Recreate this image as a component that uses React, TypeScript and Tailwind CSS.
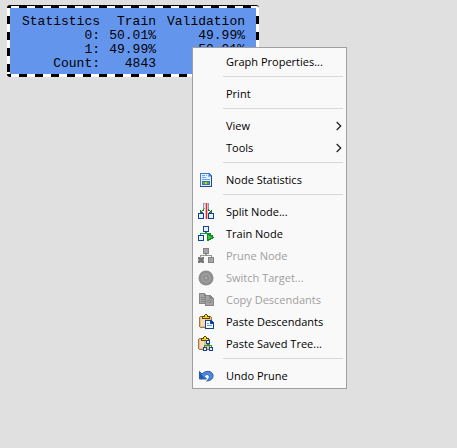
import type { ReactNode } from "react";

const OUT = "#12409a";

function Svg({ children }: { children: ReactNode }) {
  return (
    <svg width="18" height="18" viewBox="0 0 18 18" shapeRendering="crispEdges" aria-hidden="true">
      {children}
    </svg>
  );
}

function Box({ x, y, s = 6, stroke = OUT, fill = "#e4f1ff" }: { x: number; y: number; s?: number; stroke?: string; fill?: string }) {
  return (
    <>
      <rect x={x} y={y} width={s} height={s} fill={stroke} />
      <rect x={x + 1} y={y + 1} width={s - 2} height={s - 2} fill={fill} />
    </>
  );
}

const icons: Record<string, ReactNode> = {
  stats: (
    <Svg>
      <path d="M3 2h9l3 3v11H3z" fill="#3f78cc" />
      <path d="M14 5h1v11H3v-1h11z" fill="#1d4a9e" />
      <path d="M4 3h7v3h3v9H4z" fill="#e3f0ff" />
      <path d="M11 3h1v2h2v1h-3z" fill="#8ab4ea" />
      <path d="M5 4h3v1H5zM9 4h1v1H9zM5 6h4v1H5zM5 8h8v1H5z" fill="#6fa3e6" />
      <path d="M5 10h8v4H5z" fill="#3c6db5" />
      <path d="M6 11h2v2H6z" fill="#3fbf4a" />
      <path d="M8 11h2v2H8z" fill="#f0b429" />
      <path d="M10 11h2v2h-2z" fill="#3ab54a" />
    </Svg>
  ),
  split: (
    <Svg>
      <Box x={6} y={0} stroke="#7d9ccc" fill="#d9e6f7" />
      <path d="M6 6h1v2H5v1h1v1H3V7h1v1h1V7h1zM11 6h1v1h1v1h1V7h1v3h-3V9h1V8h-2z" fill="#16812a" />
      <path d="M8 0h3v16H8z" fill="#f7b4b4" />
      <path d="M9 0h1v16H9z" fill="#d22c2c" />
      <Box x={1} y={10} />
      <Box x={11} y={10} />
    </Svg>
  ),
  train: (
    <Svg>
      <Box x={6} y={1} />
      <path d="M8 7h2v1h4v2h-1V9H4v1H3V8h5z" fill="#23963a" />
      <Box x={1} y={10} />
      <path d="M10 8h2v1h2v1h2v2h1v1h-1v1h-2v1h-2v1h-2z" fill="#0f8a1e" />
      <path d="M11 10h1v1h2v1h1v1h-2v1h-2z" fill="#35c245" />
    </Svg>
  ),
  prune: (
    <Svg>
      <Box x={6} y={1} stroke="#858585" fill="#a5a5a5" />
      <path d="M8 7h2v1h5v2h-1V9H4v1H3V8h5z" fill="#959595" />
      <Box x={11} y={10} stroke="#858585" fill="#a5a5a5" />
      <path d="M1 10h6v6H1z" fill="#a5a5a5" />
      <path d="M1 10h2v1h2v-1h2v2H6v2h1v2H5v-1H3v1H1v-2h1v-2H1z" fill="#757575" />
    </Svg>
  ),
  target: (
    <svg width="18" height="18" viewBox="0 0 18 18" aria-hidden="true">
      <circle cx="9" cy="9" r="7.5" fill="#8e8e8e" />
      <circle cx="9" cy="9" r="5" fill="#9e9e9e" />
      <circle cx="9" cy="9" r="3" fill="#8e8e8e" />
      <circle cx="9" cy="9" r="1.3" fill="#adadad" />
    </svg>
  ),
  copy: (
    <Svg>
      <path d="M2 2h5l3 3v8H2z" fill="#868686" />
      <path d="M3 3h4v2h2v7H3z" fill="#a5a5a5" />
      <path d="M4 6h4v1H4zM4 8h4v1H4zM4 10h4v1H4z" fill="#868686" />
      <path d="M8 4h5l4 4v7H8z" fill="#868686" />
      <path d="M9 5h3v3h4v6H9z" fill="#a5a5a5" />
      <path d="M10 9h5v1h-5zM10 11h5v1h-5z" fill="#868686" />
    </Svg>
  ),
  paste: (
    <Svg>
      <path d="M3 3h11v1h1v10h-1v1H3v-1H2V4h1z" fill="#a87442" />
      <path d="M3 4h11v10H3z" fill="#e6bf90" />
      <path d="M4 5h4v8H4z" fill="#f6dcb6" />
      <path d="M5 3h2V2h1V1h2v1h1v1h2v3H5z" fill="#5c4c0c" />
      <path d="M6 4h2V2h2v2h2v1H6z" fill="#f5d51e" />
      <path d="M8 7h6l3 3v6H8z" fill={OUT} />
      <path d="M9 8h4v3h3v4H9z" fill="#f4f9ff" />
      <path d="M10 10h2v1h-2zM10 12h5v1h-5z" fill="#6ba0e0" />
    </Svg>
  ),
  pasteTree: (
    <Svg>
      <path d="M2 3h10v1h1v10h-1v1H2v-1H1V4h1z" fill="#a87442" />
      <path d="M2 4h10v10H2z" fill="#e6bf90" />
      <path d="M3 5h4v8H3z" fill="#f6dcb6" />
      <path d="M4 3h2V2h1V1h2v1h1v1h2v3H4z" fill="#5c4c0c" />
      <path d="M5 4h2V2h2v2h2v1H5z" fill="#f5d51e" />
      <Box x={9} y={5} s={4} />
      <path d="M10 9h2v1h3v2h-1v-1H8v1H7v-2h3z" fill="#23963a" />
      <Box x={6} y={12} s={4} />
      <Box x={12} y={12} s={4} />
    </Svg>
  ),
  undo: (
    <svg width="18" height="18" viewBox="0 0 18 18" aria-hidden="true">
      <path
        d="M2.500 4.500V12H9.500L7.300 9.500C8.500 7 11.800 6.800 12.300 9.300c.3 1.900-.8 3.300-2.600 4.700 4.300-.2 6.700-2.600 6.300-5.800C15.400 4 9 2.700 5 7z"
        fill="#4f8ade"
        stroke="#2459ae"
      />
      <path d="M3 6v5.500h4.500z" fill="#1d55b0" />
    </svg>
  ),
};

type Item = { label: string; icon?: string; disabled?: boolean; sub?: boolean };

const groups: Item[][] = [
  [{ label: "Graph Properties..." }],
  [{ label: "Print" }],
  [{ label: "View", sub: true }, { label: "Tools", sub: true }],
  [{ label: "Node Statistics", icon: "stats" }],
  [
    { label: "Split Node...", icon: "split" },
    { label: "Train Node", icon: "train" },
    { label: "Prune Node", icon: "prune", disabled: true },
    { label: "Switch Target...", icon: "target", disabled: true },
    { label: "Copy Descendants", icon: "copy", disabled: true },
    { label: "Paste Descendants", icon: "paste" },
    { label: "Paste Saved Tree...", icon: "pasteTree" },
  ],
  [{ label: "Undo Prune", icon: "undo" }],
];

const rows = [
  ["0:", "50.01%", "49.99%"],
  ["1:", "49.99%", "50.01%"],
  ["Count:", "4843", ""],
];

function MenuItem({ label, icon, disabled, sub }: Item) {
  return (
    <button
      type="button"
      role="menuitem"
      disabled={disabled}
      aria-haspopup={sub ? "menu" : undefined}
      className="flex h-[22px] w-full items-center pr-1 pl-1 text-left text-black disabled:text-[#a0a0a0]"
    >
      <span className="mr-[11px] w-[18px] shrink-0">{icon && icons[icon]}</span>
      <span className="flex-1 whitespace-nowrap">{label}</span>
      {sub && (
        <svg width="6" height="10" viewBox="0 0 6 10" fill="none" stroke="#222" strokeWidth="1.3" aria-hidden="true">
          <path d="M0.700 1l4 4-4 4" />
        </svg>
      )}
    </button>
  );
}

export default function App() {
  return (
    <main className="relative min-h-screen bg-[#e0e0e0] pt-[5px] pl-[7px]">
      <div className="w-fit overflow-hidden rounded-[3px] border-t border-black bg-[repeating-linear-gradient(90deg,#000_0_4px,#fff_4px_12px,#000_12px_16px)] pt-[2px] pb-[3px]">
        <div className="bg-[repeating-linear-gradient(180deg,#fff_0_8px,#000_8px_16px)] px-[3px]">
          <table className="w-[246px] table-fixed bg-[#6495ed] font-['Liberation_Mono',monospace] text-[13px] leading-[14px] text-black">
            <thead>
              <tr className="*:pt-[7px] *:text-right *:font-normal">
                <th className="w-[90px]">Statistics</th>
                <th className="w-[56px]">Train</th>
                <th className="pr-[11px]">Validation</th>
              </tr>
            </thead>
            <tbody className="*:last:*:pb-[3px]">
              {rows.map(([name, train, validation]) => (
                <tr key={name}>
                  <th className="text-right font-normal">{name}</th>
                  <td className="text-right">{train}</td>
                  <td className="pr-[11px] text-right">{validation}</td>
                </tr>
              ))}
            </tbody>
          </table>
        </div>
      </div>
      <div
        role="menu"
        className="absolute top-[47px] left-[192px] w-[155px] border border-[#a0a0a0] bg-[#f9f9f9] pt-[3px] pb-px font-['Open_Sans','Noto_Sans',sans-serif] text-[11px] leading-4"
      >
        {groups.map((items, i) => (
          <div key={items[0].label}>
            {i > 0 && <hr className="mt-[3px] mr-[3px] mb-[6px] ml-[30px] border-t border-[#d7d7d7]" />}
            {items.map((item) => (
              <MenuItem key={item.label} {...item} />
            ))}
          </div>
        ))}
      </div>
    </main>
  );
}
